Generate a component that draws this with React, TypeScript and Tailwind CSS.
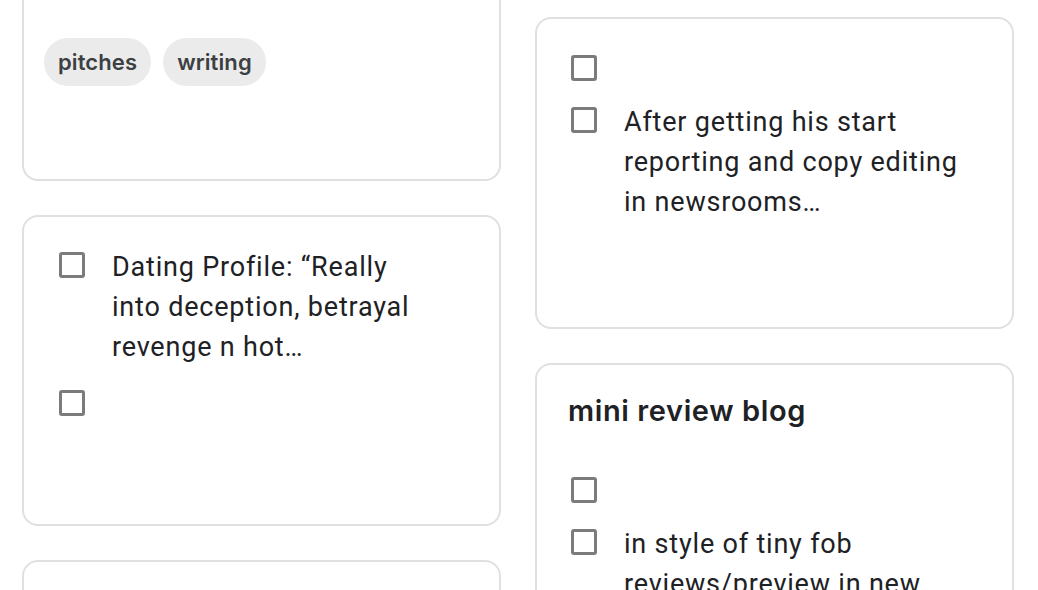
const body = "font-['Roboto','Liberation_Sans',sans-serif]";
const head = "font-['Inter','Roboto',sans-serif]";

function Box() {
  return <div className="mt-[5px] h-[26px] w-[26px] shrink-0 rounded-[3px] border-[3px] border-[#7b7b7b]" />;
}

function Item({ lines }: { lines?: string[] }) {
  return (
    <div className="flex items-start gap-[27px]">
      <Box />
      {lines ? (
        <div className={`${body} pb-[6px] text-[27px] leading-[40px] tracking-[0.8px] text-[#202124]`}>
          {lines.map((l, i) => (
            <div key={i}>{l}</div>
          ))}
        </div>
      ) : (
        <div className="h-[40px]" />
      )}
    </div>
  );
}

function Card({ children, className = '' }: { children?: React.ReactNode; className?: string }) {
  return <div className={`rounded-[16px] border-2 border-[#e0e0e0] bg-white ${className}`}>{children}</div>;
}

function Chip({ label }: { label: string }) {
  return (
    <span className={`${head} inline-flex h-[48px] items-center rounded-full bg-[#ebebeb] px-[14px] text-[22px] font-semibold tracking-[0.1px] text-[#3c4043]`}>
      {label}
    </span>
  );
}

export default function App() {
  return (
    <div className="h-[590px] w-[1038px] overflow-hidden bg-white">
      <div className="flex gap-[34px] px-[22px]">
        <div className="-mt-[40px] flex w-[479px] flex-col gap-[34px]">
          <Card className="px-[20px] pb-[93px] pt-[76px]">
            <div className="flex gap-[12px]">
              <Chip label="pitches" />
              <Chip label="writing" />
            </div>
          </Card>
          <Card className="flex flex-col gap-[12px] pb-[99px] pl-[35px] pr-[20px] pt-[30px]">
            <Item lines={['Dating Profile: “Really', 'into deception, betrayal', 'revenge n hot…']} />
            <Item />
          </Card>
          <Card className="h-[300px]" />
        </div>
        <div className="flex w-[479px] flex-col gap-[34px] pt-[17px]">
          <Card className="flex flex-col gap-[12px] pb-[99px] pl-[34px] pr-[20px] pt-[31px]">
            <Item />
            <Item lines={['After getting his start', 'reporting and copy editing', 'in newsrooms…']} />
          </Card>
          <Card className="pb-[99px] pl-[31px] pr-[20px] pt-[26px]">
            <div className={`${head} text-[29px] font-semibold leading-[40px] tracking-[0.6px] text-[#202124]`}>
              mini review blog
            </div>
            <div className="flex flex-col gap-[12px] pl-[3px] pt-[41px]">
              <Item />
              <Item lines={['in style of tiny fob', 'reviews/preview in new', 'product roundups']} />
            </div>
          </Card>
        </div>
      </div>
    </div>
  );
}
